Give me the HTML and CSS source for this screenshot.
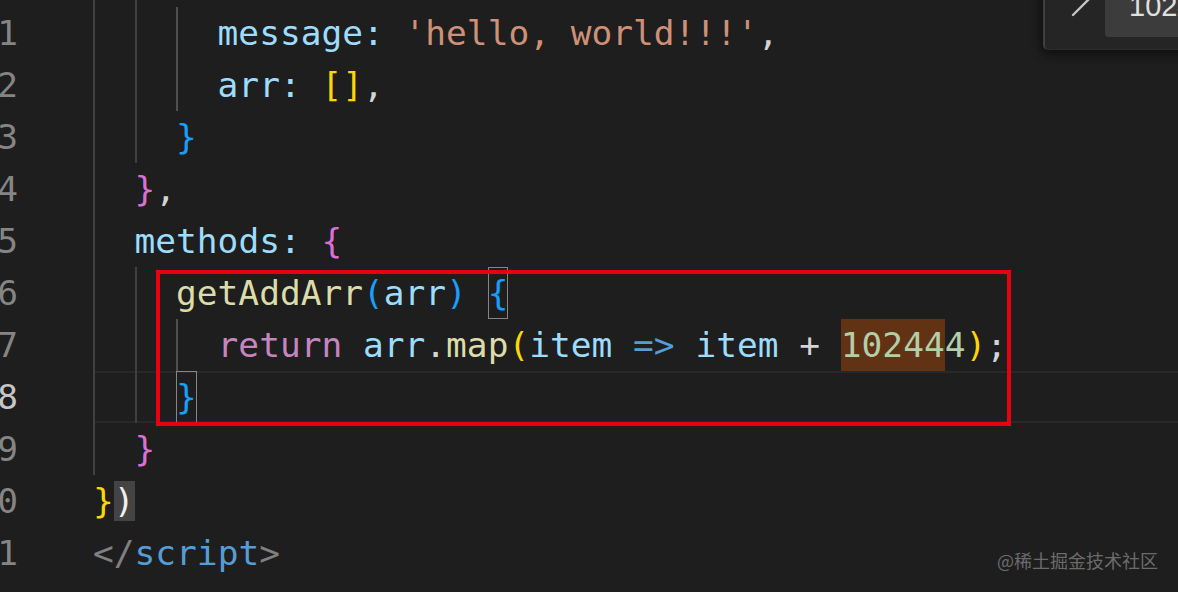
FILE: index.html
```html
<!DOCTYPE html>
<html lang="en">
<head>
<meta charset="utf-8">
<title>Editor</title>
<link rel="stylesheet" href="styles.css">
</head>
<body>
<div class="page">
  <div class="editor">
    <div class="line"><span class="ln"></span><span class="code"><span class="ind"></span><span class="ind"></span></span></div>
    <div class="line"><span class="ln">1</span><span class="code"><span class="ind"></span><span class="ind"></span><span class="ind ind-hi"></span><span class="prop">message:</span> <span class="str">'hello, world!!!'</span><span class="pu">,</span></span></div>
    <div class="line"><span class="ln">2</span><span class="code"><span class="ind"></span><span class="ind"></span><span class="ind ind-hi"></span><span class="prop">arr:</span> <span class="y">[]</span><span class="pu">,</span></span></div>
    <div class="line"><span class="ln">3</span><span class="code"><span class="ind"></span><span class="ind"></span><span class="b">}</span></span></div>
    <div class="line"><span class="ln">4</span><span class="code"><span class="ind"></span><span class="p">}</span><span class="pu">,</span></span></div>
    <div class="line"><span class="ln">5</span><span class="code"><span class="ind"></span><span class="prop">methods:</span> <span class="p">{</span></span></div>
    <div class="line"><span class="ln">6</span><span class="code"><span class="ind"></span><span class="ind"></span><span class="fn">getAddArr</span><span class="b">(</span><span class="prop">arr</span><span class="b">)</span> <span class="b bm">{</span></span></div>
    <div class="line"><span class="ln">7</span><span class="code"><span class="ind"></span><span class="ind"></span><span class="ind ind-hi"></span><span class="kw">return</span> <span class="prop">arr</span><span class="pu">.</span><span class="fn">map</span><span class="y">(</span><span class="prop">item</span> <span class="op">=&gt;</span> <span class="prop">item</span> <span class="pu">+</span> <span class="num"><span class="match">10244</span>4</span><span class="y">)</span><span class="pu">;</span></span></div>
    <div class="line"><span class="ln ln-active">8</span><span class="code current"><span class="ind"></span><span class="ind"></span><span class="b bm">}</span></span></div>
    <div class="line"><span class="ln">9</span><span class="code"><span class="ind"></span><span class="p">}</span></span></div>
    <div class="line"><span class="ln">0</span><span class="code"><span class="y">}</span><span class="cur">)</span></span></div>
    <div class="line"><span class="ln">1</span><span class="code"><span class="tag">&lt;/</span><span class="tagname">script</span><span class="tag">&gt;</span></span></div>
    <div class="line"><span class="ln"></span><span class="code"></span></div>
  </div>

  <div class="annotation"></div>

  <div class="find-widget">
    <svg class="chevron" width="26" height="40" viewBox="0 0 26 40"><polyline points="5,3 22,20 5,37" fill="none" stroke="#c5c5c5" stroke-width="2.4" stroke-linecap="round" stroke-linejoin="round"/></svg>
    <div class="find-input">10244</div>
  </div>

  <div class="watermark">@稀土掘金技术社区</div>
</div>
</body>
</html>
```

FILE: styles.css
```css
html, body {
  margin: 0;
  padding: 0;
  background: #1e1e1e;
}

.page {
  position: relative;
  width: 1178px;
  height: 592px;
  overflow: hidden;
  background: #1e1e1e;
}

.editor {
  margin-top: -45px;
  font-family: "DejaVu Sans Mono", "Liberation Mono", monospace;
  font-size: 34.5px;
  color: #d4d4d4;
}

.line {
  display: flex;
  height: 52px;
  line-height: 52px;
}

.ln {
  flex: none;
  width: 18px;
  margin-right: 75px;
  display: flex;
  justify-content: flex-end;
  white-space: nowrap;
  color: #858585;
}

.ln-active {
  color: #c6c6c6;
}

.code {
  flex: 1;
  white-space: pre;
}

.code.current {
  box-shadow: inset 0 2px 0 #282828, inset 0 -2px 0 #282828;
}

.ind {
  display: inline-block;
  width: 2ch;
  height: 52px;
  vertical-align: top;
  box-sizing: border-box;
  border-left: 2px solid #404040;
}

.ind-hi {
  border-left-color: #4f4f4f;
}

.prop { color: #9cdcfe; }
.str { color: #ce9178; }
.pu { color: #d4d4d4; }
.y { color: #ffd700; }
.p { color: #da70d6; }
.b { color: #179fff; }
.fn { color: #dcdcaa; }
.kw { color: #c586c0; }
.op { color: #569cd6; }
.num { color: #b5cea8; }
.tag { color: #808080; }
.tagname { color: #569cd6; }

.bm {
  display: inline-block;
  height: 52px;
  vertical-align: top;
  box-shadow: inset 0 0 0 1px #858585;
}

.match {
  display: inline-block;
  height: 52px;
  vertical-align: top;
  background: #613214;
}

.cur {
  color: #f0f0f0;
  background: #444444;
}

.annotation {
  position: absolute;
  left: 156px;
  top: 270px;
  width: 855px;
  height: 156px;
  box-sizing: border-box;
  border: 4px solid #e8000e;
}

.find-widget {
  position: absolute;
  left: 1043px;
  top: -40px;
  width: 200px;
  height: 90px;
  box-sizing: border-box;
  background: #252526;
  border-left: 2px solid #3f3f3f;
  border-bottom: 1px solid #2c2c2c;
  border-radius: 0 0 0 5px;
  box-shadow: 0 2px 10px 3px rgba(0, 0, 0, 0.45);
  display: flex;
  align-items: flex-start;
}

.chevron {
  flex: none;
  margin-left: 23px;
  margin-top: 18px;
}

.find-input {
  flex: none;
  margin-left: 11px;
  margin-top: 10px;
  width: 160px;
  height: 67px;
  box-sizing: border-box;
  padding-left: 24px;
  background: #3c3c3c;
  border-radius: 4px;
  font-family: "Liberation Sans", Arial, sans-serif;
  font-size: 29px;
  line-height: 1;
  padding-top: 22px;
  color: #e0e0e0;
}

.watermark {
  position: absolute;
  right: 20px;
  top: 548px;
  font-family: "Noto Sans CJK SC", "Noto Sans", sans-serif;
  font-size: 18px;
  line-height: 24px;
  color: #6b6b6b;
}
```
